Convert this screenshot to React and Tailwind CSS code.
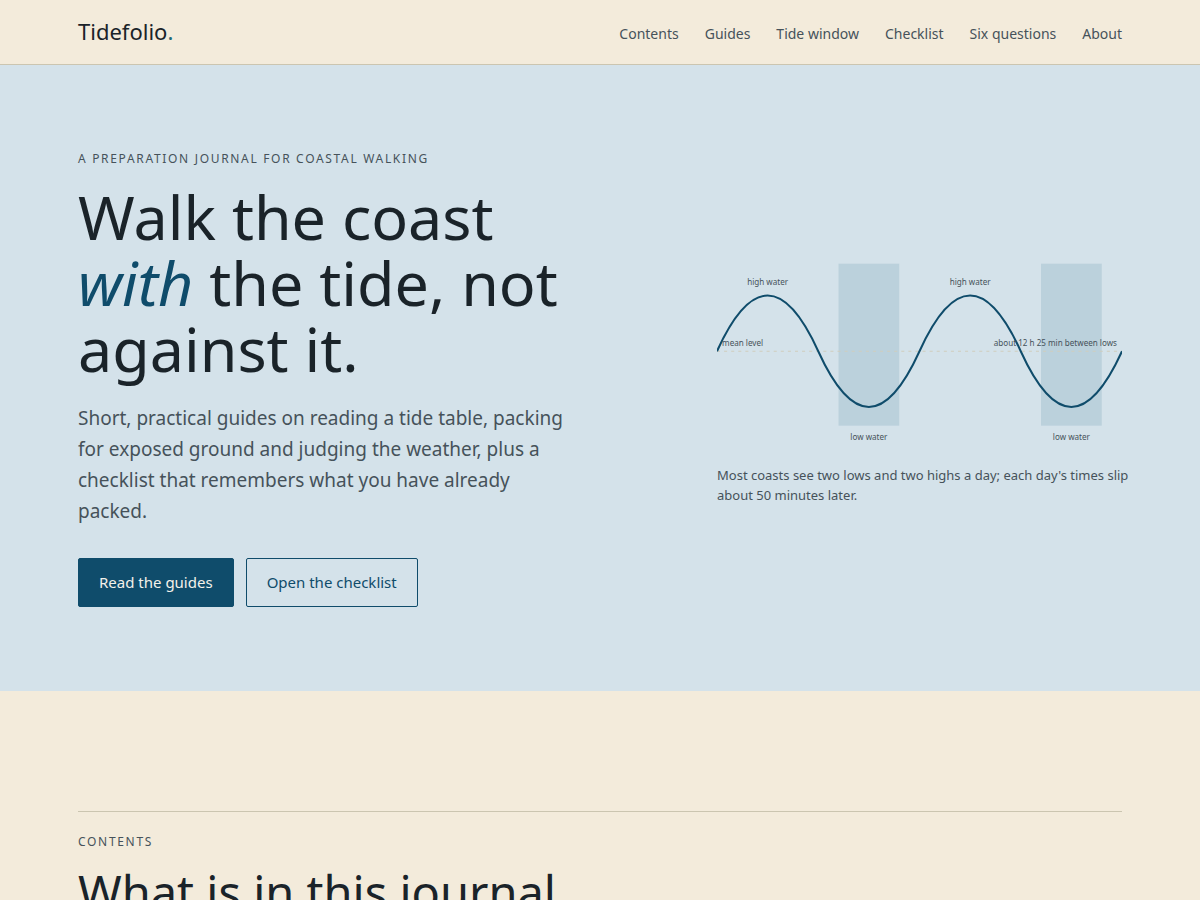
const NAV = [
  { href: "#contents", label: "Contents" },
  { href: "#guides", label: "Guides" },
  { href: "#tide-window", label: "Tide window" },
  { href: "#checklist", label: "Checklist" },
  { href: "#questions", label: "Six questions" },
  { href: "#about", label: "About" },
];

function Header() {
  return (
    <header className="border-b border-[#cbc5b0]">
      <div className="mx-auto flex h-16 max-w-[1140px] items-center justify-between px-12">
        <a href="#top" className="pb-0.5 text-[22px] leading-8">
          Tidefolio<span className="text-[#1f6a78]">.</span>
        </a>
        <nav aria-label="Main" className="flex gap-[26px] pt-1 text-[14px] leading-6 text-[#46525a]">
          {NAV.map((item) => (
            <a key={item.href} href={item.href} className="hover:text-[#0f4c6b]">{item.label}</a>
          ))}
        </nav>
      </div>
    </header>
  );
}

function TideCurve() {
  return (
    <svg viewBox="0 0 400 200" className="block w-full" role="img" aria-label="Tide curve with two high waters and two low waters">
      <rect x="120" y="12.5" width="60" height="160" fill="#bbd1dc" />
      <rect x="320" y="12.5" width="60" height="160" fill="#bbd1dc" />
      <line x1="0" y1="99" x2="400" y2="99" stroke="#cfcdbd" strokeWidth="1" strokeDasharray="3 4" />
      <path d="M0 99 Q50 -11 100 99 T200 99 T300 99 T400 99" fill="none" stroke="#0f4c6b" strokeWidth="2" />
      <g fill="#46525a" fontSize="8">
        <text x="50" y="34" textAnchor="middle">high water</text>
        <text x="250" y="34" textAnchor="middle">high water</text>
        <text x="150" y="187" textAnchor="middle">low water</text>
        <text x="350" y="187" textAnchor="middle">low water</text>
        <text x="5" y="94">mean level</text>
        <text x="395" y="94" textAnchor="end">about 12 h 25 min between lows</text>
      </g>
    </svg>
  );
}

function Hero() {
  return (
    <section id="top" className="bg-[#d4e2ea]">
      <div className="mx-auto grid max-w-[1140px] grid-cols-[minmax(0,7fr)_minmax(0,5fr)] items-center gap-[72px] px-12 py-[84px]">
        <div>
          <p className="text-[12px] leading-5 tracking-[0.14em] text-[#46525a] uppercase">A preparation journal for coastal walking</p>
          <h1 className="mt-[15px] max-w-[520px] text-[61px] leading-[66px]">
            Walk the coast <em className="text-[#0f4c6b]">with</em> the tide, not against it.
          </h1>
          <p className="mt-[21px] max-w-[500px] text-[19px] leading-[31px] text-[#46525a]">
            Short, practical guides on reading a tide table, packing for exposed ground and judging the weather, plus a
            checklist that remembers what you have already packed.
          </p>
          <div className="mt-[31px] flex gap-3 text-[15px] leading-[23px]">
            <a href="#guides" className="rounded-xs border border-[#0f4c6b] bg-[#0f4c6b] px-5 py-3 text-[#f3f1ea]">Read the guides</a>
            <a href="#checklist" className="rounded-xs border border-[#0f4c6b] px-5 py-3 text-[#0f4c6b]">Open the checklist</a>
          </div>
        </div>
        <figure>
          <TideCurve />
          <figcaption className="-mr-2 mt-3 text-[13px] leading-5 text-[#46525a]">
            Most coasts see two lows and two highs a day; each day's times slip about 50 minutes later.
          </figcaption>
        </figure>
      </div>
    </section>
  );
}

function Contents() {
  return (
    <section id="contents" className="mx-auto max-w-[1140px] px-12 pt-[120px]">
      <div className="border-t border-[#cbc5b0] pt-5">
        <p className="text-[12px] leading-5 tracking-[0.14em] text-[#46525a] uppercase">Contents</p>
        <h2 className="mt-3 text-[47px] leading-[56px]">What is in this journal</h2>
      </div>
    </section>
  );
}

export default function App() {
  return (
    <div className="h-screen overflow-hidden bg-[#f3ebdb] font-['Noto_Sans',sans-serif] text-[#1a2329]">
      <Header />
      <main>
        <Hero />
        <Contents />
      </main>
    </div>
  );
}
